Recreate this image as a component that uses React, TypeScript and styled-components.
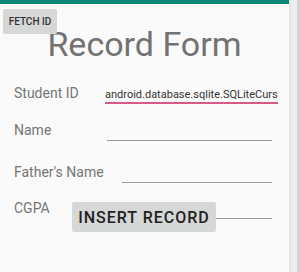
import styled, { createGlobalStyle } from 'styled-components';

const GlobalStyle = createGlobalStyle`
  html, body {
    margin: 0;
    padding: 0;
    background: #fafafa;
    font-family: Roboto, "Liberation Sans", sans-serif;
  }
`;

// 화면 전체: 본문 + 오른쪽 스크롤 띠
const Screen = styled.div`
  display: flex;
  width: 299px;
  height: 272px;
  overflow: hidden;
  background: #fafafa;
`;

const Main = styled.div`
  width: 289px;
  display: flex;
  flex-direction: column;
`;

const TopBar = styled.div`
  height: 4px;
  background: #0b8876;
`;

const Content = styled.div`
  position: relative;
  display: flex;
  flex-direction: column;
`;

const ScrollStrip = styled.div`
  width: 6px;
  background: #eeeeee;
  border-left: 2px solid #e4e4e4;
  border-right: 2px solid #d2d2d2;
`;

const FetchButton = styled.button`
  position: absolute;
  left: 3px;
  top: 5px;
  width: 54px;
  height: 25px;
  padding: 0;
  border: none;
  border-radius: 2px;
  background: #d6d7d7;
  color: #333;
  font-family: Roboto, "Liberation Sans", sans-serif;
  font-size: 10px;
  font-weight: 500;
  z-index: 1;
`;

const Title = styled.h1`
  margin: 20px 0 0;
  text-align: center;
  font-size: 34px;
  line-height: 40px;
  font-weight: 400;
  color: #727272;
`;

// 라벨 + 입력칸 한 줄
const Row = styled.div<{ $start: number; $gap: number }>`
  display: grid;
  grid-template-columns: ${(p) => p.$start - 14}px 1fr;
  align-items: end;
  height: 24px;
  margin-top: ${(p) => p.$gap}px;
  padding: 0 17px 0 14px;
`;

const Label = styled.span`
  font-size: 14px;
  line-height: 16px;
  color: #757575;
  margin-bottom: 3px;
  white-space: nowrap;
`;

const Field = styled.div<{ $focused?: boolean }>`
  position: relative;
  height: 100%;
  box-sizing: border-box;
  display: flex;
  align-items: flex-end;
  border-bottom: ${(p) => (p.$focused ? '2px solid #d9588a' : '1px solid #9a9a9a')};
  overflow: visible;
`;

const FieldText = styled.span`
  display: block;
  width: 100%;
  overflow: hidden;
  white-space: nowrap;
  font-size: 11px;
  line-height: 13px;
  padding-bottom: 1px;
  color: #333;
`;

const InsertButton = styled.button`
  position: absolute;
  left: 0;
  top: 7px;
  width: 144px;
  height: 30px;
  padding: 0;
  border: none;
  border-radius: 2px;
  background: #d6d7d7;
  color: #222;
  font-family: Roboto, "Liberation Sans", sans-serif;
  font-size: 16px;
  font-weight: 500;
  letter-spacing: 1px;
`;

const App = () => {
  return (
    <>
      <GlobalStyle />
      <Screen>
        <Main>
          <TopBar />
          <Content>
            <FetchButton>FETCH ID</FetchButton>
            <Title>Record Form</Title>
            <Row $start={105} $gap={16}>
              <Label>Student ID</Label>
              <Field $focused>
                <FieldText>android.database.sqlite.SQLiteCurs</FieldText>
              </Field>
            </Row>
            <Row $start={107} $gap={13}>
              <Label>Name</Label>
              <Field />
            </Row>
            <Row $start={122} $gap={18}>
              <Label>Father's Name</Label>
              <Field />
            </Row>
            <Row $start={72} $gap={12}>
              <Label>CGPA</Label>
              <Field>
                <InsertButton>INSERT RECORD</InsertButton>
              </Field>
            </Row>
          </Content>
        </Main>
        <ScrollStrip />
      </Screen>
    </>
  );
};

export default App;
